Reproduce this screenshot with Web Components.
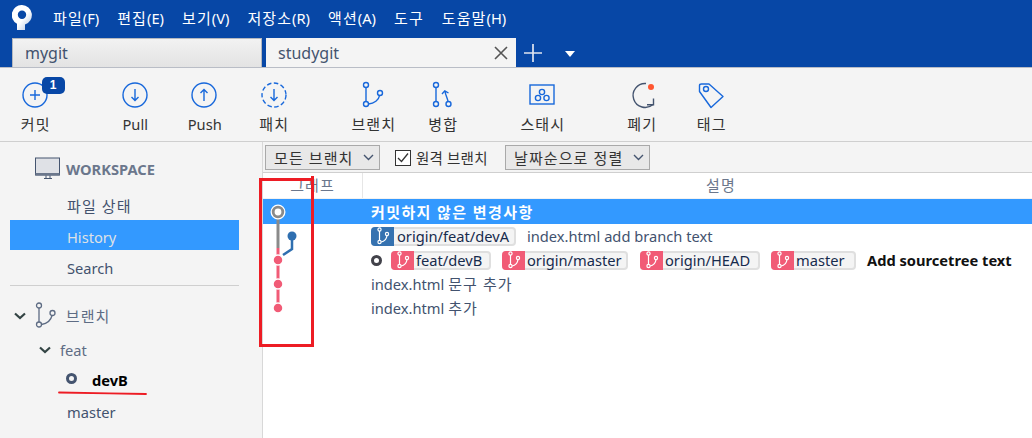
<!DOCTYPE html>
<html lang="ko"><head><meta charset="utf-8"><title>Sourcetree</title>
<style>
html,body{margin:0;padding:0;width:1032px;height:438px;overflow:hidden;background:#fff;font:14.67px "Noto Sans","Noto Sans CJK KR",sans-serif;color:#172b4d}
</style></head><body>
<app-shell>
  <title-bar></title-bar>
  <tab-strip></tab-strip>
  <tool-bar></tool-bar>
  <main-pane>
    <side-bar></side-bar>
    <log-view></log-view>
  </main-pane>
</app-shell>
<script>
const K=s=>s.replace(/>([^<>]*)</g,(m,t)=>'>'+t.replace(/[가-힣]+( [가-힣]+)*/g,x=>`<span class="k">${x}</span>`)+'<');
const define=(name,css,html)=>customElements.define(name,class extends HTMLElement{
  connectedCallback(){ if(this.shadowRoot) return; const r=this.attachShadow({mode:'open'});
    r.innerHTML=`<style>.k{font-size:15px;letter-spacing:1.1px}${css}</style>${K(html)}`; }
});
const FONT='"Noto Sans","Noto Sans CJK KR",sans-serif';
const BR=(c='#fff')=>`<svg width="14" height="18" viewBox="0 0 14 18" fill="none" stroke="${c}" stroke-width="1.2"><circle cx="3.5" cy="2.5" r="1.6"/><circle cx="3.5" cy="15" r="1.6"/><circle cx="11" cy="7" r="1.6"/><path d="M3.500 4.100V13.400M5.100 15C8 14.500 10.500 12 11 8.600"/></svg>`;

define('app-shell',`:host{display:flex;flex-direction:column;position:relative;width:1032px;height:438px;overflow:hidden;font-family:${FONT}}`,`<slot></slot>
<svg style="position:absolute;left:0;top:0;pointer-events:none" width="1032" height="438" fill="none" stroke="#ed1c24">
<path stroke-width="3" d="M260.500 346V179.500H313M312.500 176V347M259 345.500H313"/>
<path stroke-width="1.800" stroke-linecap="round" d="M59 392.500C85 393 118 393.500 146 394"/></svg>`);

define('title-bar',`:host{display:flex;align-items:flex-start;height:38px;background:#0747a6;color:#fff;flex:none}
svg{margin:5px 0 0 12px;flex:none}
nav{display:flex;gap:18px;margin:7px 0 0 21px;line-height:22px}`,
`<svg width="20" height="25" viewBox="0 0 20 25"><defs><linearGradient id="lg" x1="0" y1="0" x2="1" y2="1"><stop offset=".55" stop-color="#fff"/><stop offset="1" stop-color="#a9bfe0"/></linearGradient></defs><path fill="url(#lg)" fill-rule="evenodd" d="M10 0A10 10 0 0 1 13 19.500V25H5V18.800A10 10 0 0 1 10 0ZM10 5.500A4.200 4.200 0 1 0 10 13.900A4.200 4.200 0 0 0 10 5.500Z"/></svg>
<nav><span>파일(F)</span><span>편집(E)</span><span>보기(V)</span><span>저장소(R)</span><span>액션(A)</span><span>도구</span><span>도움말(H)</span></nav>`);

define('tab-strip',`:host{display:flex;height:29px;background:#0747a6;padding-left:12px;flex:none;align-items:flex-end}
.tab{box-sizing:border-box;height:29px;width:250px;display:flex;align-items:center;font-size:16px;color:#42526e;padding-left:12px}
.off{background:linear-gradient(#f2f2f2,#e3e3e3);border:1px solid #b4b8bf;border-bottom:0;margin-right:4px;width:250px}
.on{background:#f4f4f4;width:250px;padding-left:12px;justify-content:space-between;padding-right:8px;color:#44546f}
.x{display:block}.plus{margin-left:7px;margin-right:22px;align-self:center}.tri{align-self:center;margin-top:3px}`,
`<div class="tab off">mygit</div><div class="tab on"><span>studygit</span><svg class="x" width="14" height="14" viewBox="0 0 14 14" stroke="#555" stroke-width="1.600"><path d="M1 1 13 13M13 1 1 13"/></svg></div>
<svg class="plus" width="20" height="20" viewBox="0 0 20 20" stroke="#dfe5f0" stroke-width="1.700"><path d="M10 1V19M1 10H19"/></svg>
<svg class="tri" width="10" height="6" viewBox="0 0 10 6"><path fill="#fff" d="M0 0H10L5 6Z"/></svg>`);

define('tool-button',`:host{display:flex;flex-direction:column;align-items:center;width:69.500px;position:relative;color:#333}
.i{width:40px;height:30px;display:block}.i ::slotted(svg){display:block}
.l{margin-top:4px;line-height:21px;padding-left:1px}`,`<div class="i"><slot></slot></div><div class="l"><slot name="label"></slot></div>`);

const S='fill="none" stroke="#1868db" stroke-width="1.400"';
define('tool-bar',`:host{display:flex;height:75px;box-sizing:border-box;background:#f4f4f4;border-top:1px solid #b9bdc6;border-bottom:1px solid #cfcfcf;padding:12px 0 0 .5px;flex:none}
.gap{width:30px}.badge{position:absolute;left:41px;top:-3px;width:23px;height:17px;background:#0747a6;color:#fff;border-radius:5px;font:bold 12px/17px "Liberation Sans",sans-serif;text-align:center}`,
`<tool-button><svg width="40" height="30" ${S}><circle cx="20" cy="15" r="12"/><path d="M15 15H25M20 10V20"/></svg><span class="badge" style="position:absolute">1</span><span slot="label">커밋</span></tool-button>
<div class="gap"></div>
<tool-button><svg width="40" height="30" ${S}><circle cx="20" cy="15" r="12"/><path d="M20 9V20.500M16.500 17 20 20.500 23.500 17"/></svg><span slot="label">Pull</span></tool-button>
<tool-button><svg width="40" height="30" ${S}><circle cx="20" cy="15" r="12"/><path d="M20 21V9.500M16.500 13 20 9.500 23.500 13"/></svg><span slot="label">Push</span></tool-button>
<tool-button><svg width="40" height="30" ${S}><circle cx="20" cy="15" r="12" stroke-dasharray="4.500 2.500"/><path d="M20 9V20.500M16.500 17 20 20.500 23.500 17"/></svg><span slot="label">패치</span></tool-button>
<div class="gap"></div>
<tool-button><svg width="40" height="30" ${S}><circle cx="13" cy="5" r="2.500"/><circle cx="13" cy="24" r="2.500"/><circle cx="27" cy="13" r="2.500"/><path d="M13 7.500V21.500M15.500 24C21 23.500 26 20 26.500 15.500"/></svg><span slot="label">브랜치</span></tool-button>
<tool-button><svg width="40" height="30" ${S}><circle cx="13" cy="5" r="2.500"/><circle cx="13" cy="24" r="2.500"/><circle cx="25.500" cy="24" r="2.500"/><path d="M13 7.500V21.500M25 21.500C24.500 18 22.500 15.500 22 11M19 14 21.800 10.800 25.500 13"/></svg><span slot="label">병합</span></tool-button>
<div class="gap"></div>
<tool-button><svg width="40" height="30" ${S}><rect x="8" y="5" width="24" height="19"/><circle cx="20" cy="12" r="2.600"/><circle cx="16" cy="18" r="2.600"/><circle cx="24.500" cy="18" r="2.600"/></svg><span slot="label">스태시</span></tool-button>
<div class="gap"></div>
<tool-button><svg width="40" height="30" fill="none" stroke="#44546f" stroke-width="1.400"><path d="M24 3.500A12 12 0 1 0 31 24.500"/><path d="M25 24.800H31.500V18.500"/><circle cx="29" cy="7" r="3" fill="#ff5630" stroke="none"/></svg><span slot="label">폐기</span></tool-button>
<tool-button><svg width="40" height="30" ${S}><path d="M8.500 11.500V5.500Q8.500 4 10.500 4H18L32 16.500 20 27.500Z" stroke-linejoin="round"/><circle cx="15" cy="9" r="2.500"/></svg><span slot="label">태그</span></tool-button>`);

define('main-pane',`:host{display:flex;flex:1;min-height:0;background:#fff}`,`<slot></slot>`);

define('side-item',`:host{display:flex;align-items:center;box-sizing:border-box;height:31px;padding:2px 0 0 57px;color:#42526e}`,`<slot></slot>`);

const CHEV=`<svg width="12" height="8" viewBox="0 0 12 8" fill="none" stroke="#344" stroke-width="2.200"><path d="M1 1.500 6 6 11 1.500"/></svg>`;
define('side-bar',`:host{display:block;box-sizing:border-box;width:263px;flex:none;background:#f4f4f4;border-right:1px solid #d8d8d8;padding:0 23px 0 10px;color:#42526e}
.h{display:flex;align-items:center;box-sizing:border-box;height:47px;padding:6px 0 0 25px;gap:5px;font-weight:700;color:#6b778c}
hr{border:0;border-top:1px solid #cfcfcf;margin:3px 0 13px}
.b{display:flex;align-items:center;box-sizing:border-box;height:31px;color:#5e6c84;padding:2px 0 0 4px}
.b svg:first-child{margin-right:9px}
.f{padding-left:29px;margin-top:4px;padding-top:0}.f svg{margin-right:15px}
.d{font-weight:700;color:#000;padding-left:56px;height:29px;padding-top:0}.d i{display:block;width:5px;height:5px;border:3px solid #44546f;border-radius:50%;margin-right:15px;margin-top:-2px}`,
`<div class="h"><svg width="26" height="23" viewBox="0 0 26 23"><rect x=".5" y="1" width="24" height="17" fill="#dfe1e6" stroke="#44546f"/><rect x=".5" y="16" width="24" height="2.500" fill="#6b778c"/><path d="M9 21.500H17M11 18.500V21.500M15 18.500V21.500" stroke="#44546f"/></svg><span>WORKSPACE</span></div>
<side-item>파일 상태</side-item>
<side-item style="background:#3399ff;color:#dfe1e6;height:30px;margin-bottom:1px;padding-top:3px">History</side-item>
<side-item style="padding-top:3px">Search</side-item>
<hr>
<div class="b">${CHEV}<svg width="22" height="27" viewBox="0 0 22 27" fill="none" stroke="#5e6c84" stroke-width="1.300" style="margin-right:5px"><circle cx="4" cy="3.500" r="2.500"/><circle cx="4" cy="22.500" r="2.500"/><circle cx="17.500" cy="11" r="2.500"/><path d="M4 6V20M6.500 22.500C12 21.500 16 18 17 13.500"/></svg><span>&nbsp;</span><span>브랜치</span></div>
<div class="b f">${CHEV}<span>feat</span></div>
<div class="b d"><i></i><span>devB</span></div>
<side-item style="height:33px;padding-top:3px">master</side-item>`);

define('tb-button',`:host{display:inline-flex;box-sizing:border-box;align-items:center;height:25px;background:#e8e8e8;border:1px solid #a9a9a9;color:#333;padding:0 5px 0 8px;justify-content:space-between;flex:none;white-space:nowrap}
svg{margin-left:4px}`,`<slot></slot><svg width="11" height="7" viewBox="0 0 11 7" fill="none" stroke="#44546f" stroke-width="1.400"><path d="M1 1 5.500 5.500 10 1"/></svg>`);

define('filter-bar',`:host{display:flex;align-items:center;height:31px;box-sizing:border-box;background:#f4f4f4;border-bottom:1px solid #cfcfcf;padding:1px 0 0 2px;flex:none}
.c{display:flex;align-items:center;margin-left:15px;color:#333;width:95px;margin-right:15px;flex:none;white-space:nowrap}
.c svg{margin-right:5px;flex:none}.c .k{font-size:14.5px;letter-spacing:.2px}`,
`<tb-button style="width:115px"><span>모든 브랜치</span></tb-button>
<div class="c"><svg width="16" height="16" viewBox="0 0 16 16" fill="none" stroke="#333"><rect x=".5" y=".5" width="15" height="15" fill="#fff"/><path stroke-width="1.300" d="M3 8 6.500 11.500 13 3.500"/></svg><span>원격 브랜치</span></div>
<tb-button style="width:145px"><span>날짜순으로 정렬</span></tb-button>`);

define('ref-badge',`:host{display:inline-flex;box-sizing:border-box;height:19px;background:#f4f4f4;border:2px solid #dfdfdf;border-left:0;border-radius:4px;align-items:center;color:#172b4d;flex:none;overflow:visible;font-size:14.67px}
.i{width:23px;height:19px;border-radius:4px 0 0 4px;background:var(--bc,#f15b76);display:flex;align-items:center;justify-content:center;margin-right:var(--mr,3px);flex:none}
.i svg{display:block}`,`<div class="i">${BR()}</div><slot></slot>`);

define('log-row',`:host{display:flex;align-items:center;height:24px;padding-left:108px;color:#42526e;white-space:nowrap;flex:none}
:host([sel]){background:#3399ff;color:#fff;font-weight:700;height:25px}`,`<slot></slot>`);

define('log-view',`:host{display:flex;flex-direction:column;flex:1;min-width:0;position:relative}
.head{display:flex;height:25px;color:#6b778c;border-bottom:1px solid #f2f2f2;flex:none}
.g{width:99px;text-align:center;border-right:1px solid #e6e6e6;line-height:25px}.s{flex:1;text-align:center;line-height:25px;padding-left:47px}
.ring{display:block;width:5px;height:5px;border:3px solid #42424a;border-radius:50%;margin:0 9px 0 0}
svg.graph{position:absolute;left:0;top:58px;pointer-events:none}
.m{margin-left:11px}.gap ref-badge{margin-right:11px;--mr:2px}
.bold{font-weight:700;color:#111}
.k2 .k{letter-spacing:1.400px}
.up{margin-top:-2px}`,
`<filter-bar></filter-bar>
<div class="head"><div class="g">그래프</div><div class="s">설명</div></div>
<log-row sel><span class="k2">커밋하지 않은 변경사항</span></log-row>
<log-row><ref-badge style="--bc:#3572b0;width:145px">origin/feat/devA</ref-badge><span class="m">index.html add branch text</span></log-row>
<log-row class="gap"><i class="ring"></i><ref-badge style="width:100px">feat/devB</ref-badge><ref-badge style="width:126px;margin-right:12px">origin/master</ref-badge><ref-badge style="width:120px">origin/HEAD</ref-badge><ref-badge style="width:85px">master</ref-badge><span class="bold">Add sourcetree text</span></log-row>
<log-row><span class="up">index.html 문구 추가</span></log-row>
<log-row><span class="up">index.html 추가</span></log-row>
<svg class="graph" width="60" height="130" fill="none">
<path d="M15 17V48" stroke="#8a8a8a" stroke-width="3"/><path d="M15 48V108" stroke="#f15b76" stroke-width="3"/>
<circle cx="15" cy="12" r="5.500" stroke="#fff" stroke-width="4" fill="#fff"/><circle cx="15" cy="12" r="4.800" stroke="#8a8a8a" stroke-width="2.800" fill="#fff"/>
<path d="M29 38V49L20 55" stroke="#2f6fb0" stroke-width="2.500"/><circle cx="29" cy="36" r="4.500" fill="#2f6fb0"/>
<g fill="#f15b76" stroke="#fff" stroke-width="1.500"><circle cx="15" cy="60" r="5"/><circle cx="15" cy="84" r="5"/><circle cx="15" cy="108" r="5"/></g></svg>`);
</script>
</body></html>
